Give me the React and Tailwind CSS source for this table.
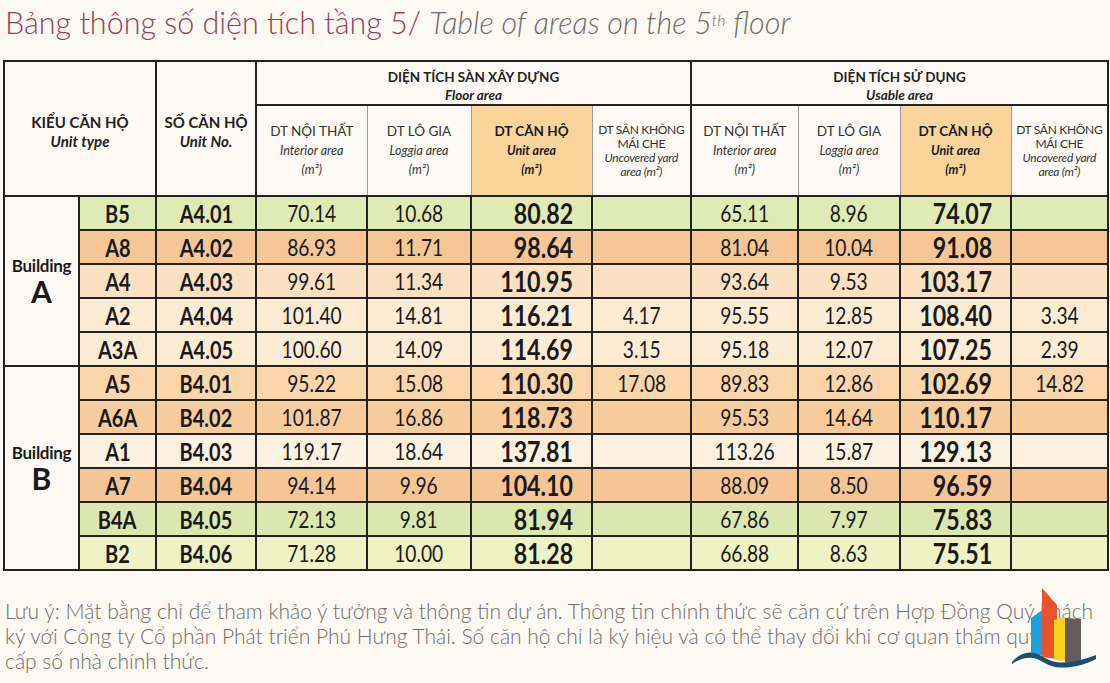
import React from "react";

const rows = [
  { b: "A", span: 5, t: "B5", n: "A4.01", v: ["70.14", "10.68", "80.82", "", "65.11", "8.96", "74.07", ""], bg: "bg-[#e0eab4]" },
  { t: "A8", n: "A4.02", v: ["86.93", "11.71", "98.64", "", "81.04", "10.04", "91.08", ""], bg: "bg-[#f6c697]" },
  { t: "A4", n: "A4.03", v: ["99.61", "11.34", "110.95", "", "93.64", "9.53", "103.17", ""], bg: "bg-[#fbe1c1]" },
  { t: "A2", n: "A4.04", v: ["101.40", "14.81", "116.21", "4.17", "95.55", "12.85", "108.40", "3.34"], bg: "bg-[#fdecd4]" },
  { t: "A3A", n: "A4.05", v: ["100.60", "14.09", "114.69", "3.15", "95.18", "12.07", "107.25", "2.39"], bg: "bg-[#fdecd4]" },
  { b: "B", span: 6, t: "A5", n: "B4.01", v: ["95.22", "15.08", "110.30", "17.08", "89.83", "12.86", "102.69", "14.82"], bg: "bg-[#fbd6aa]" },
  { t: "A6A", n: "B4.02", v: ["101.87", "16.86", "118.73", "", "95.53", "14.64", "110.17", ""], bg: "bg-[#f8cb9d]" },
  { t: "A1", n: "B4.03", v: ["119.17", "18.64", "137.81", "", "113.26", "15.87", "129.13", ""], bg: "bg-[#fdf2df]" },
  { t: "A7", n: "B4.04", v: ["94.14", "9.96", "104.10", "", "88.09", "8.50", "96.59", ""], bg: "bg-[#f6c596]" },
  { t: "B4A", n: "B4.05", v: ["72.13", "9.81", "81.94", "", "67.86", "7.97", "75.83", ""], bg: "bg-[#dbe7ae]" },
  { t: "B2", n: "B4.06", v: ["71.28", "10.00", "81.28", "", "66.88", "8.63", "75.51", ""], bg: "bg-[#eef2c5]" },
];

const sub = [
  { vi: "DT NỘI THẤT", en: "Interior area" },
  { vi: "DT LÔ GIA", en: "Loggia area" },
  { vi: "DT CĂN HỘ", en: "Unit area", hl: true },
  { vi: "DT SÂN KHÔNG MÁI CHE", en: "Uncovered yard area", yard: true },
];

// condensed look: Lato squeezed horizontally
function Cond({ children, right }) {
  return (
    <span className={"inline-block scale-x-[0.8] " + (right ? "origin-right" : "origin-center")}>
      {children}
    </span>
  );
}

function SubHead({ s, first }) {
  return (
    <th
      className={
        "border border-[#9a9a9a] border-t-2 border-t-[#222] align-middle px-1 font-normal " +
        (first ? "border-l-2 border-l-[#222] " : "") +
        (s.hl ? "bg-[#f9d59c] text-[#1a1a1a]" : "text-[#333]")
      }
    >
      {s.yard ? (
        <div className="text-[12px] leading-[14px] tracking-[-0.3px]">
          <div>DT SÂN KHÔNG</div>
          <div>MÁI CHE</div>
          <div className="italic">Uncovered yard</div>
          <div className="italic">area (m²)</div>
        </div>
      ) : (
        <div className={"leading-[19px] " + (s.hl ? "font-bold text-[13.5px]" : "text-[13.5px]")}>
          <div>{s.vi}</div>
          <div className="italic text-[12.5px]">{s.en}</div>
          <div className="italic text-[12.5px]">(m²)</div>
        </div>
      )}
    </th>
  );
}

function Logo() {
  return (
    <svg
      className="absolute left-[1008px] top-[585px]"
      width="92"
      height="85"
      viewBox="1008 585 92 85"
    >
      <polygon points="1031,618 1045,608 1045,656 1031,654" fill="#1ea1d9" />
      <polygon points="1042,588 1057,605 1057,659 1042,657" fill="#e4552d" />
      <polygon points="1054,620 1066,617 1066,661 1054,660" fill="#f7d21c" />
      <polygon points="1065,618 1081,619 1081,665 1065,662" fill="#665c5c" />
      <path
        d="M1012,662 C1018,655 1026,651 1034,653 C1042,655 1048,661 1056,662 C1068,664 1082,660 1096,655 L1096,659 C1082,666 1068,669 1055,667 C1046,665 1040,659 1033,658 C1025,657 1018,660 1012,664 Z"
        fill="#1b4e72"
      />
    </svg>
  );
}

export default function App() {
  return (
    <div className="relative w-[1110px] h-[683px] overflow-hidden bg-[#fcf8f2] font-['Lato',sans-serif]">
      <h1 className="h-[60px] pl-[5px] pt-[1px] text-[30.5px] font-light leading-[42px] whitespace-nowrap">
        <span className="text-[#993d5d]">Bảng thông số diện tích tầng 5/ </span>
        <span className="italic text-[#6e6e6e]">
          Table of areas on the 5<sup className="text-[16px]">th</sup> floor
        </span>
      </h1>

      <div className="pl-[3px]">
        <table className="w-[1104px] table-fixed border-collapse border-2 border-[#222]">
          <colgroup>
            <col className="w-[75px]" />
            <col className="w-[77px]" />
            <col className="w-[100px]" />
            <col className="w-[111px]" />
            <col className="w-[104px]" />
            <col className="w-[121px]" />
            <col className="w-[99px]" />
            <col className="w-[107px]" />
            <col className="w-[102px]" />
            <col className="w-[111px]" />
            <col className="w-[97px]" />
          </colgroup>
          <thead className="bg-[#fdfaf5]">
            <tr className="h-[42px]">
              <th colSpan={2} rowSpan={2} className="border-2 border-[#222] pt-[6px] text-[15px] leading-[19px] text-[#222]">
                <div className="font-bold">KIỂU CĂN HỘ</div>
                <div className="font-bold italic">Unit type</div>
              </th>
              <th rowSpan={2} className="border-2 border-[#222] pt-[6px] text-[15px] leading-[19px] text-[#222]">
                <div className="font-bold">SỐ CĂN HỘ</div>
                <div className="font-bold italic">Unit No.</div>
              </th>
              <th colSpan={4} className="border-2 border-[#222] pt-[6px] text-[13.5px] leading-[18px] text-[#222]">
                <div className="font-bold">DIỆN TÍCH SÀN XÂY DỰNG</div>
                <div className="font-bold italic">Floor area</div>
              </th>
              <th colSpan={4} className="border-2 border-[#222] pt-[6px] text-[13.5px] leading-[18px] text-[#222]">
                <div className="font-bold">DIỆN TÍCH SỬ DỤNG</div>
                <div className="font-bold italic">Usable area</div>
              </th>
            </tr>
            <tr className="h-[91px]">
              {sub.map((s, i) => (
                <SubHead key={"a" + i} s={s} first={i === 0} />
              ))}
              {sub.map((s, i) => (
                <SubHead key={"b" + i} s={s} first={i === 0} />
              ))}
            </tr>
          </thead>
          <tbody className="text-[#1a1a1a]">
            {rows.map((r) => (
              <tr key={r.n} className="h-[34px]">
                {r.b && (
                  <td rowSpan={r.span} className="border-2 border-[#222] bg-[#fdfaf5] text-center align-middle">
                    <div className="font-bold text-[17px] leading-[20px] tracking-[-0.3px]">Building</div>
                    <div className="font-bold text-[30px] leading-[30px]">{r.b}</div>
                  </td>
                )}
                <td className={"border-2 border-[#222] text-center font-bold text-[25px] leading-[28px] " + r.bg}>
                  <Cond>{r.t}</Cond>
                </td>
                <td className={"border-2 border-[#222] text-center font-bold text-[25px] leading-[28px] " + r.bg}>
                  <Cond>{r.n}</Cond>
                </td>
                {r.v.map((x, i) => {
                  const big = i === 2 || i === 6;
                  return (
                    <td
                      key={i}
                      className={
                        "border-2 border-[#222] leading-[28px] " +
                        r.bg +
                        (big ? " text-right pr-[18px] font-bold text-[29px]" : " text-center text-[24px]")
                      }
                    >
                      {x && <Cond right={big}>{x}</Cond>}
                    </td>
                  );
                })}
              </tr>
            ))}
          </tbody>
        </table>
      </div>

      <div className="pl-[5px] pt-[27px] text-[21px] font-light leading-[25px] text-[#6f6f6f] whitespace-nowrap">
        <div>
          Lưu ý: Mặt bằng chỉ để tham khảo ý tưởng và thông tin dự án. Thông tin chính thức sẽ căn cứ trên Hợp Đồng Quý khách
        </div>
        <div>
          ký với Công ty Cổ phần Phát triển Phú Hưng Thái. Số căn hộ chỉ là ký hiệu và có thể thay đổi khi cơ quan thẩm quyền
        </div>
        <div>cấp số nhà chính thức.</div>
      </div>

      <Logo />
    </div>
  );
}
